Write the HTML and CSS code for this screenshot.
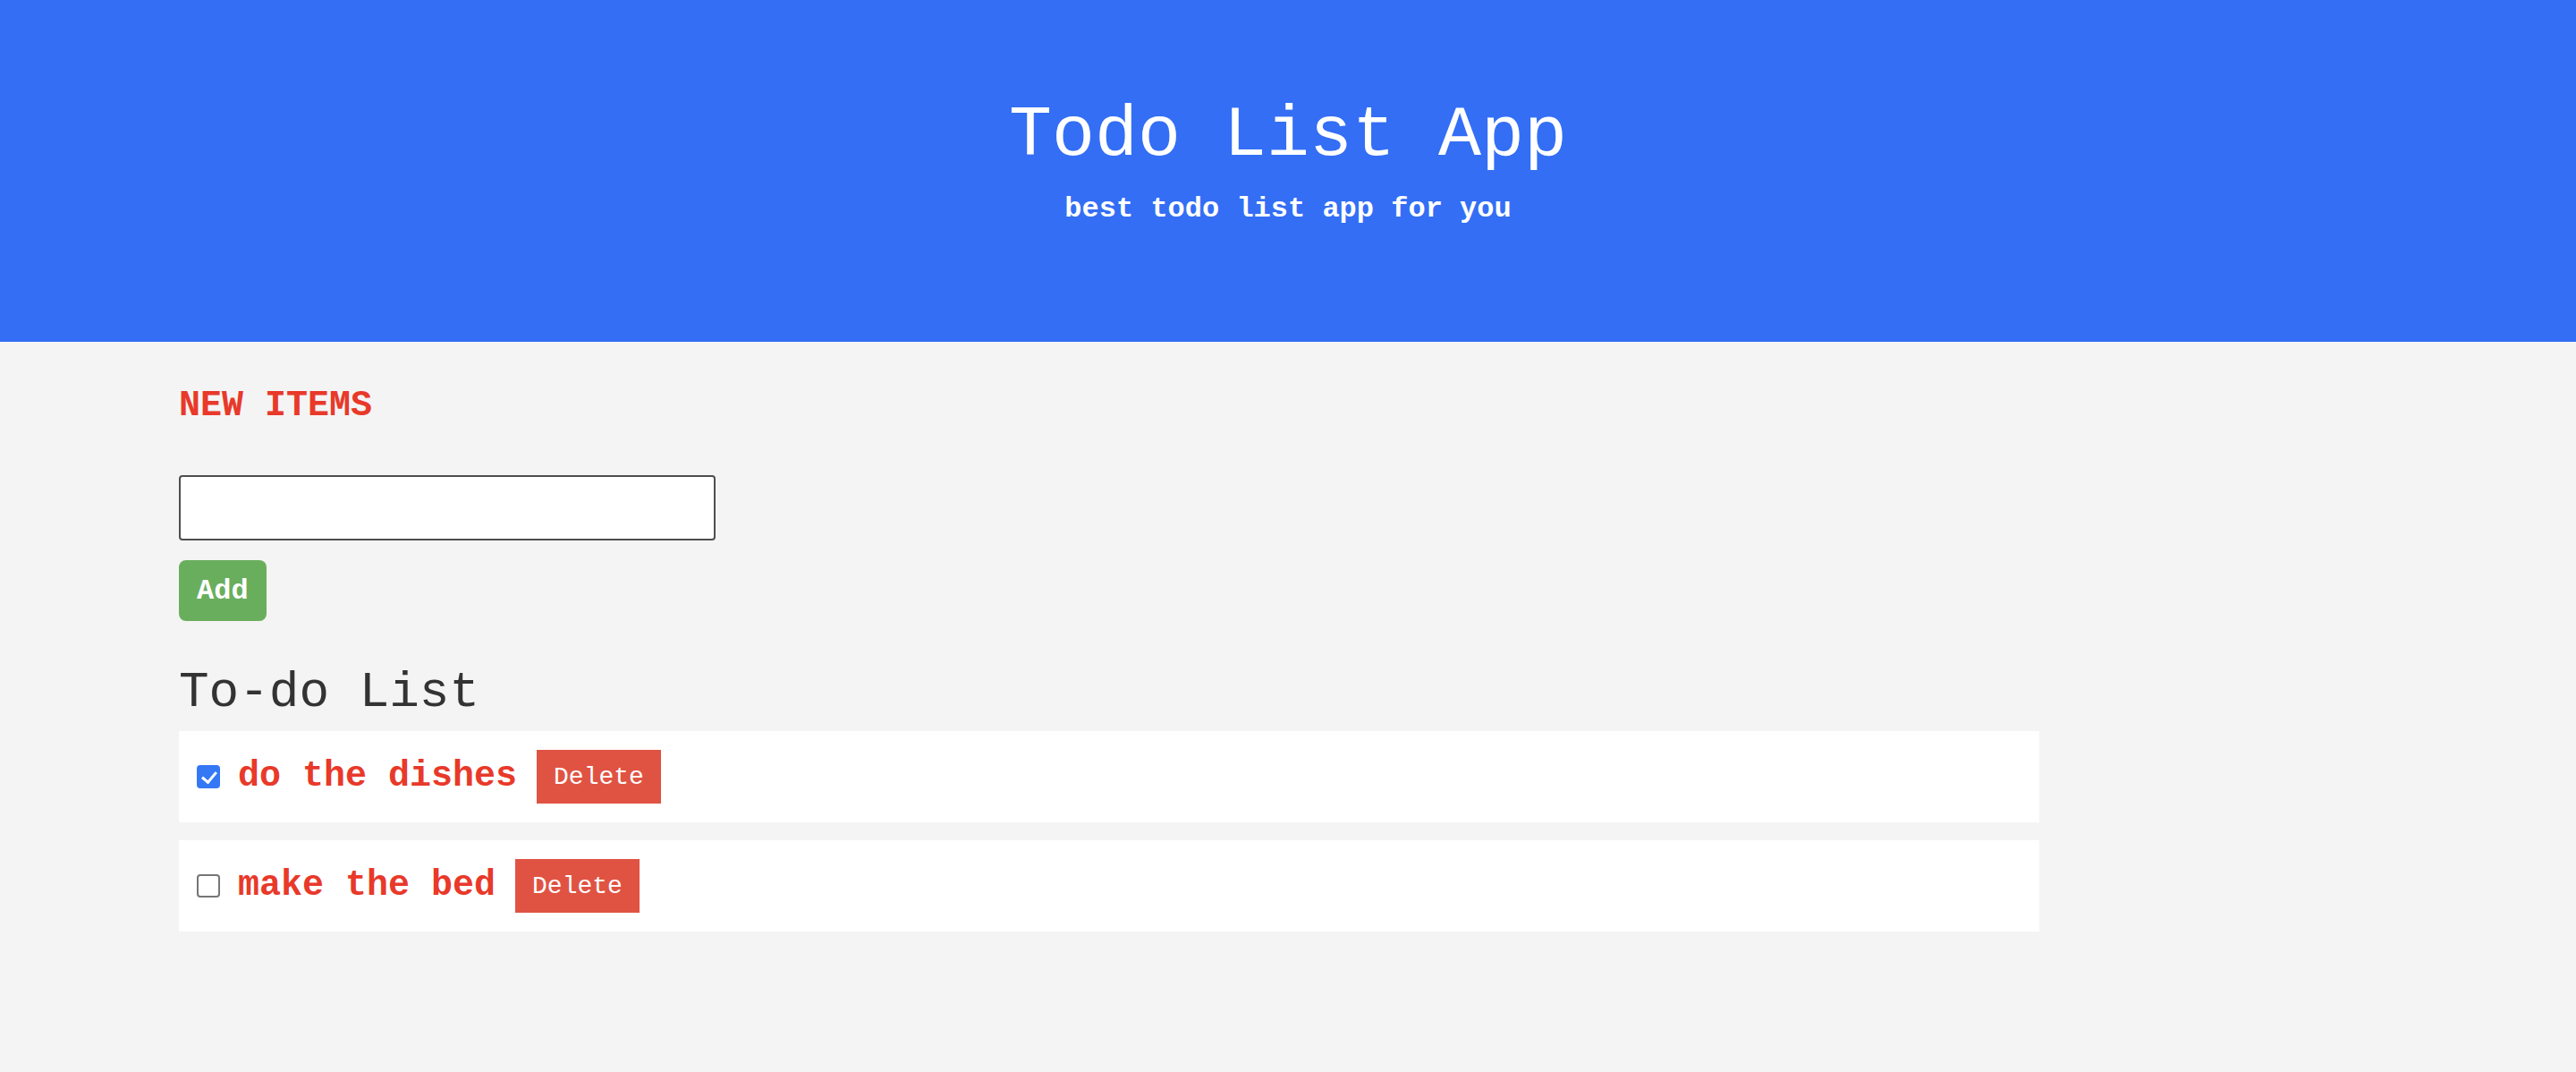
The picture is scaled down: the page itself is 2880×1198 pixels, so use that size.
FILE: index.html
```html
<!DOCTYPE html>
<html lang="en">
<head>
<meta charset="utf-8">
<title>Todo List App</title>
<link rel="stylesheet" href="styles.css">
</head>
<body>
<header class="hero">
  <h1 class="hero-title">Todo List App</h1>
  <p class="hero-sub">best todo list app for you</p>
</header>
<main class="content">
  <h2 class="section-label">NEW ITEMS</h2>
  <form class="new-form">
    <input class="new-input" type="text">
    <button class="add-btn" type="button">Add</button>
  </form>
  <h2 class="list-title">To-do List</h2>
  <ul class="todo-list">
    <li class="todo-row">
      <input class="todo-check" type="checkbox" checked>
      <span class="todo-text">do the dishes</span>
      <button class="del-btn" type="button">Delete</button>
    </li>
    <li class="todo-row">
      <input class="todo-check" type="checkbox">
      <span class="todo-text">make the bed</span>
      <button class="del-btn" type="button">Delete</button>
    </li>
  </ul>
</main>
</body>
</html>
```
FILE: styles.css
```css
* { box-sizing: border-box; }
html, body {
  margin: 0;
  padding: 0;
  background: #f4f4f4;
  font-family: "Liberation Mono", "Courier New", monospace;
}
.hero {
  background: #336ef5;
  height: 382px;
  padding-top: 112px;
  text-align: center;
  color: #ffffff;
}
.hero-title {
  margin: 0;
  font-size: 80px;
  line-height: 80px;
  font-weight: normal;
}
.hero-sub {
  margin: 26px 0 0;
  font-size: 32px;
  line-height: 32px;
  font-weight: bold;
}
.content {
  padding: 52px 0 60px 200px;
  width: 2280px;
}
.section-label {
  margin: 0;
  font-size: 40px;
  line-height: 40px;
  font-weight: bold;
  color: #e8392a;
}
.new-form {
  margin: 57px 0 0;
  display: flex;
  flex-direction: column;
  align-items: flex-start;
  gap: 22px;
}
.new-input {
  width: 600px;
  height: 73px;
  border: 2px solid #4e4e4e;
  border-radius: 4px;
  background: #ffffff;
  margin: 0;
  font-family: inherit;
  font-size: 28px;
}
.add-btn {
  height: 68px;
  padding: 0 20px;
  border: none;
  border-radius: 8px;
  background: #69ae5d;
  color: #ffffff;
  font-family: inherit;
  font-size: 32px;
  font-weight: bold;
  margin: 0;
}
.list-title {
  margin: 52px 0 0;
  font-size: 56px;
  line-height: 56px;
  font-weight: normal;
  color: #333333;
}
.todo-list {
  list-style: none;
  margin: 15px 0 0;
  padding: 0;
  display: flex;
  flex-direction: column;
  gap: 20px;
}
.todo-row {
  background: #ffffff;
  height: 102px;
  display: flex;
  align-items: center;
  padding: 0 20px;
  gap: 20px;
}
.todo-check {
  appearance: none;
  -webkit-appearance: none;
  margin: 0;
  width: 26px;
  height: 26px;
  border: 2px solid #767676;
  border-radius: 4px;
  background: #ffffff;
  position: relative;
  flex: none;
}
.todo-check:checked {
  background: #3478f6;
  border-color: #3478f6;
}
.todo-check:checked::after {
  content: "";
  position: absolute;
  left: 7px;
  top: 2px;
  width: 7px;
  height: 13px;
  border-right: 3.5px solid #ffffff;
  border-bottom: 3.5px solid #ffffff;
  transform: rotate(40deg);
}
.todo-text {
  font-size: 40px;
  line-height: 40px;
  font-weight: bold;
  color: #e8392a;
}
.del-btn {
  height: 60px;
  padding: 0 19px;
  border: none;
  border-radius: 0;
  background: #e05343;
  color: #ffffff;
  font-family: inherit;
  font-size: 28px;
  font-weight: normal;
  margin: 0 0 0 2px;
}
```
